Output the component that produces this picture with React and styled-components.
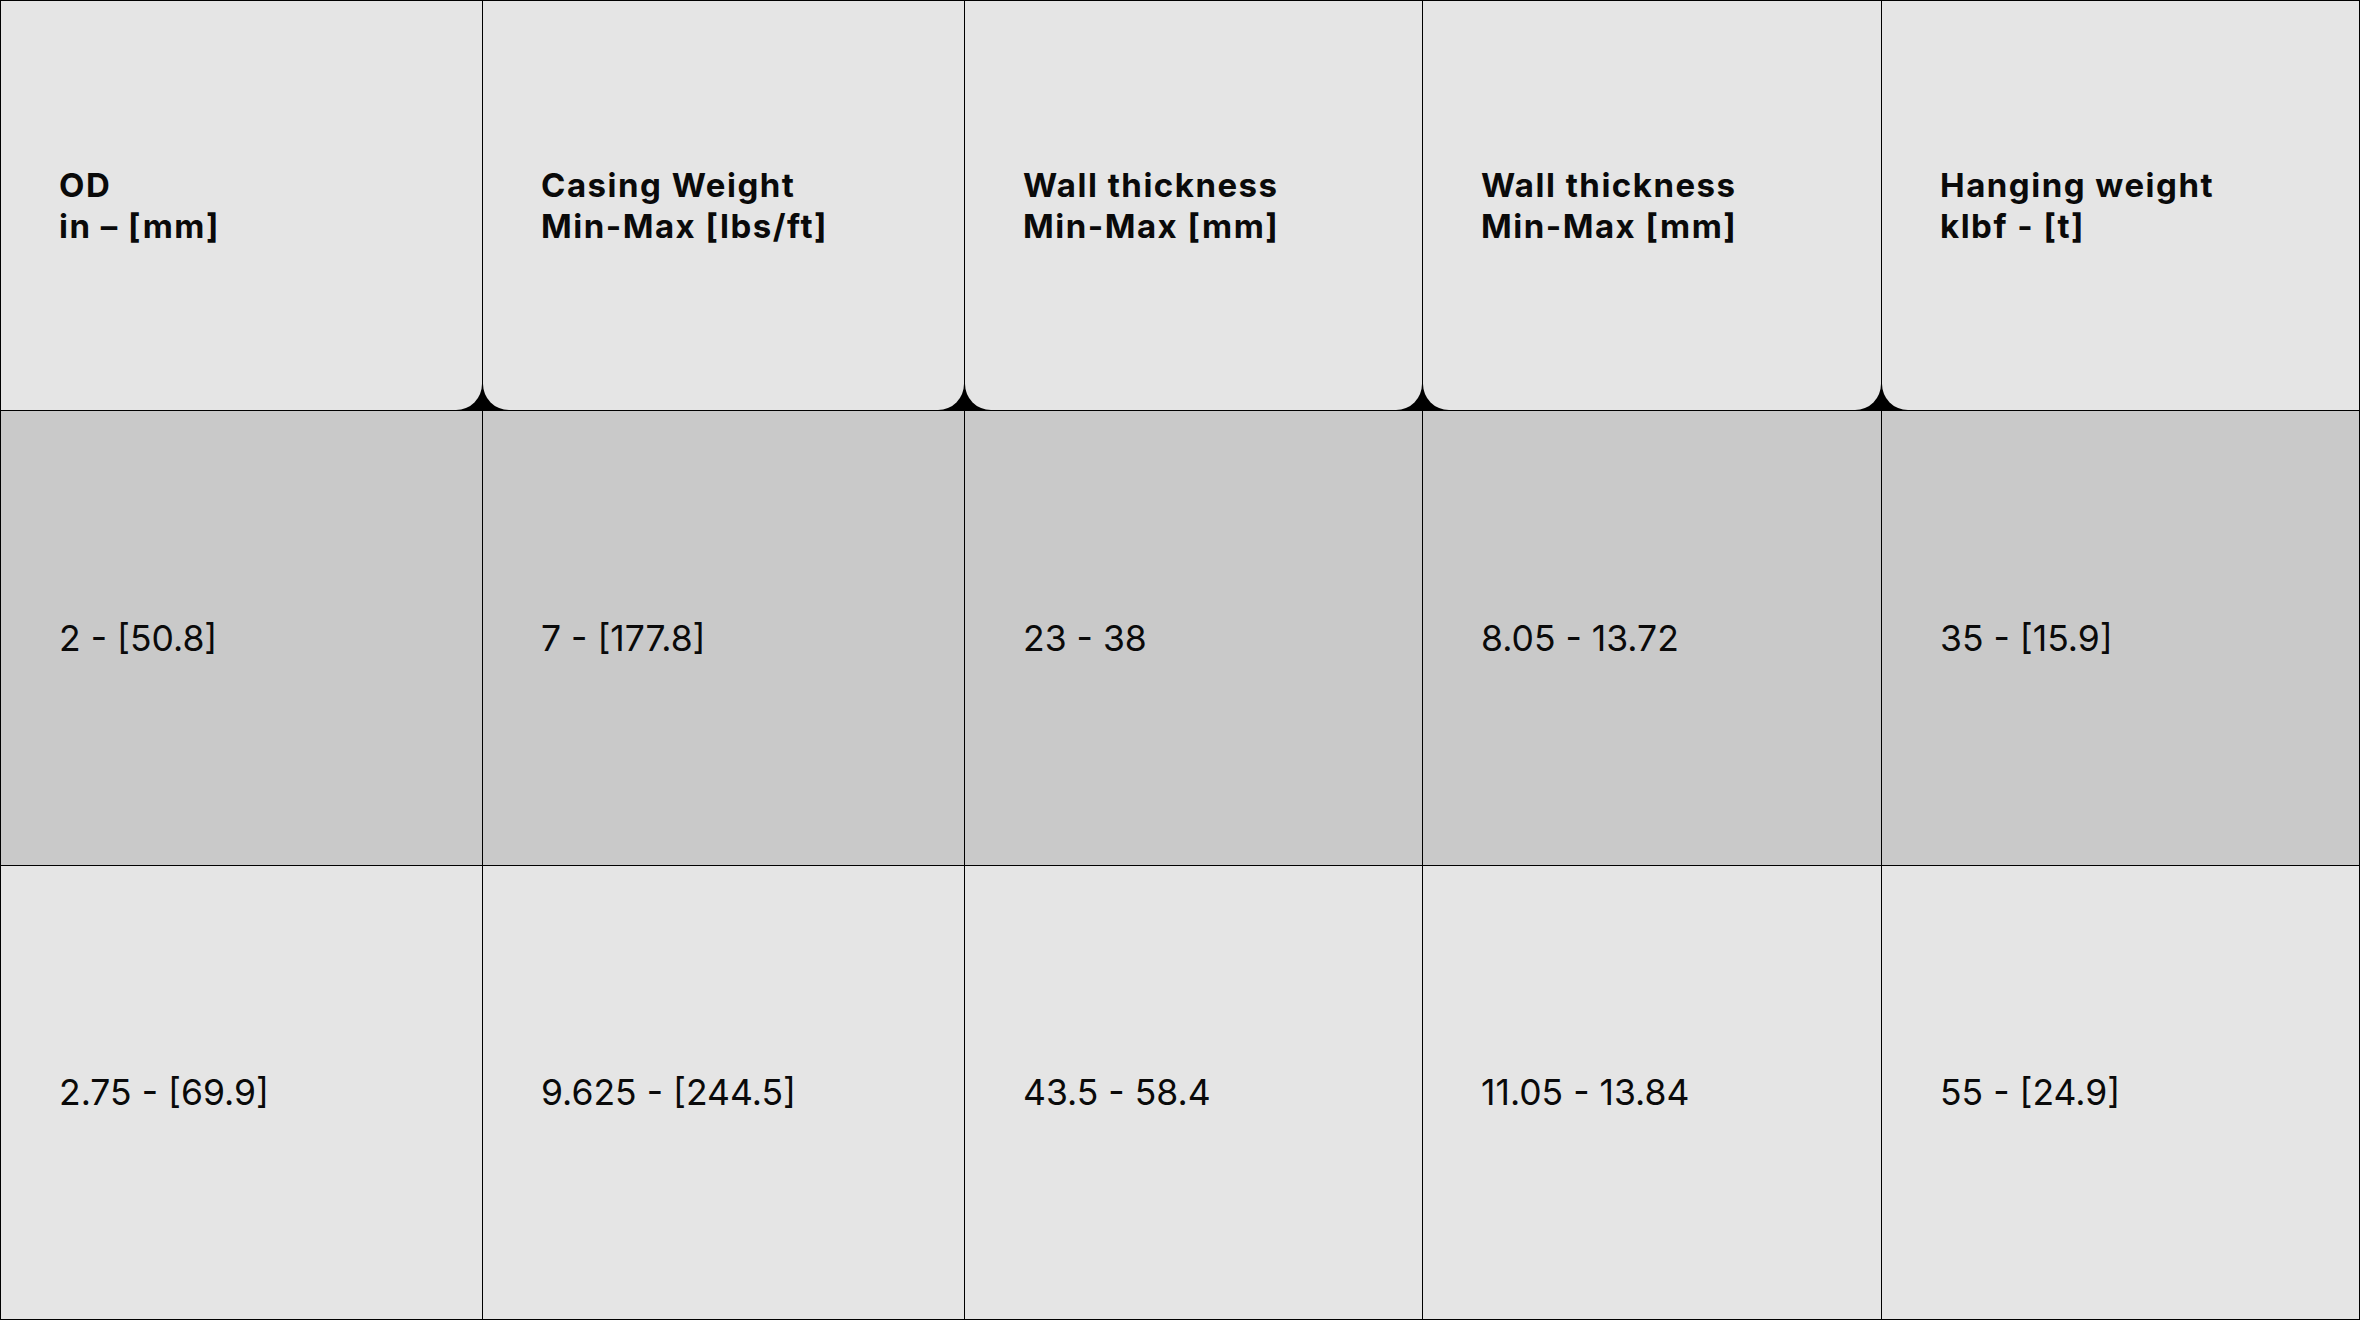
import React from "react";
import styled, { createGlobalStyle } from "styled-components";

const Global = createGlobalStyle`
  html, body { margin: 0; padding: 0; background: #e5e5e5; }
  * { box-sizing: border-box; }
`;

const Table = styled.div`
  width: 2360px;
  height: 1320px;
  display: grid;
  grid-template-columns: 481px 481px 457px 458px 1fr;
  grid-template-rows: 409px 454px 1fr;
  gap: 1px;
  padding: 1px;
  background: #000;
  font-family: Inter, "Noto Sans", sans-serif;
  color: #0a0a0a;
`;

const HeadCell = styled.div`
  background: #e5e5e5;
  display: flex;
  align-items: center;
  padding-left: 58px;
  font-size: 33px;
  font-weight: 700;
  line-height: 41px;
  letter-spacing: 1.5px;
  border-bottom-left-radius: ${(p) => (p.$first ? "0" : "26px")};
  border-bottom-right-radius: ${(p) => (p.$last ? "0" : "26px")};
`;

const Cell = styled.div`
  background: ${(p) => (p.$shade ? "#c9c9c9" : "#e5e5e5")};
  display: flex;
  align-items: center;
  padding-left: 58px;
  font-size: 35.5px;
  font-weight: 400;
  letter-spacing: 0;
`;

const headers = [
  ["OD", "in – [mm]"],
  ["Casing Weight", "Min-Max [lbs/ft]"],
  ["Wall thickness", "Min-Max [mm]"],
  ["Wall thickness", "Min-Max [mm]"],
  ["Hanging weight", "klbf - [t]"],
];

const rows = [
  ["2 - [50.8]", "7 - [177.8]", "23 - 38", "8.05 - 13.72", "35 - [15.9]"],
  ["2.75 - [69.9]", "9.625 - [244.5]", "43.5 - 58.4", "11.05 - 13.84", "55 - [24.9]"],
];

export default function App() {
  return (
    <>
      <Global />
      <Table>
        {headers.map((h, i) => (
          <HeadCell key={i} $first={i === 0} $last={i === headers.length - 1}>
            <div>
              {h[0]}
              <br />
              {h[1]}
            </div>
          </HeadCell>
        ))}
        {rows.map((r, ri) =>
          r.map((v, ci) => (
            <Cell key={`${ri}-${ci}`} $shade={ri === 0}>
              {v}
            </Cell>
          ))
        )}
      </Table>
    </>
  );
}
